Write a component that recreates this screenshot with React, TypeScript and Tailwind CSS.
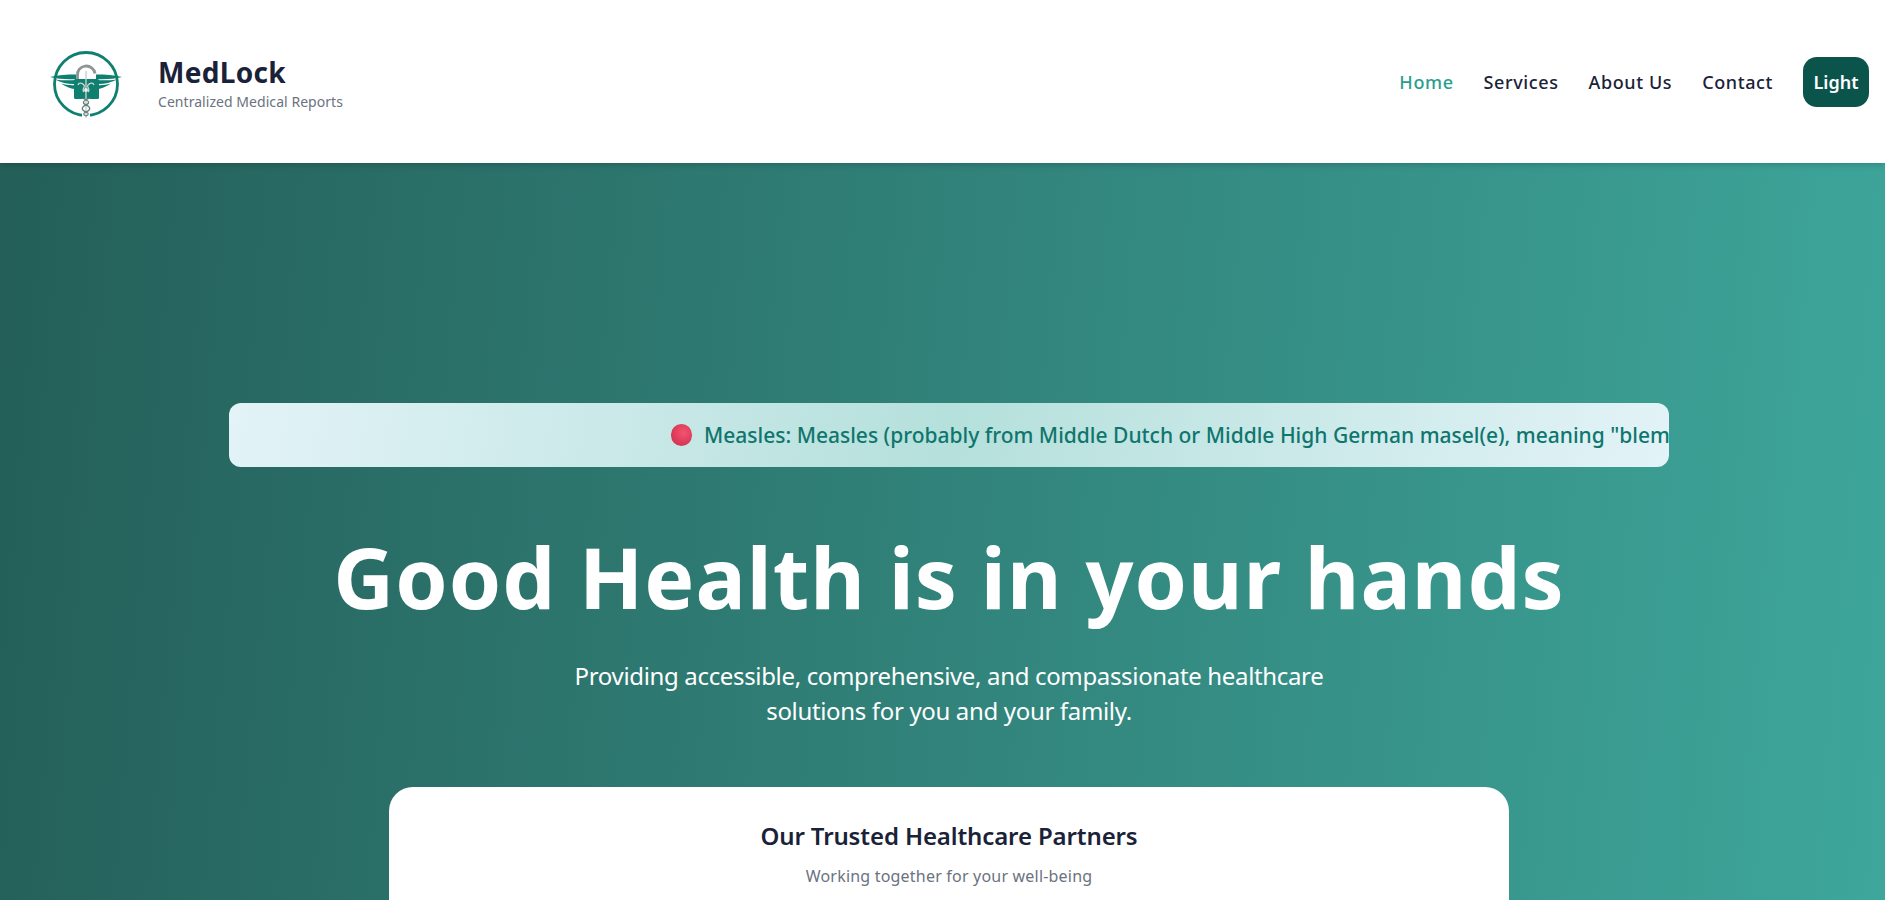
import React from "react";

// coordinates in the viewBox are page pixels, it was easier to read them off that way
const Logo = () => (
  <svg viewBox="50 47 72 72" className="w-[72px] h-[72px] mt-[3px]" fill="none">
    <circle cx="86" cy="84" r="31.5" stroke="#0f7f6f" strokeWidth="2.8" />
    {/* white gap behind the staff at the bottom of the ring */}
    <rect x="82" y="112" width="8" height="6" fill="#fff" />
    {/* wings, three feathers each */}
    <path d="M50 77 C58 75 67 74.5 76 74.5 L76 79 C67 79.5 58 79 50 77 Z" fill="#0f7f6f" />
    <path d="M55 79.5 C62 80.5 69 80.5 76 80 L76 84 C69 84.5 62 83 55 79.5 Z" fill="#0f7f6f" />
    <path d="M61 83.5 C66 85 71 85.5 76 85 L76 89 C71 89 66 87 61 83.5 Z" fill="#0f7f6f" />
    <path d="M122 77 C114 75 105 74.5 96 74.5 L96 79 C105 79.5 114 79 122 77 Z" fill="#0f7f6f" />
    <path d="M117 79.5 C110 80.5 103 80.5 96 80 L96 84 C103 84.5 110 83 117 79.5 Z" fill="#0f7f6f" />
    <path d="M111 83.5 C106 85 101 85.5 96 85 L96 89 C101 89 106 87 111 83.5 Z" fill="#0f7f6f" />
    {/* open shackle */}
    <path d="M77.5 80 V75.5 A8.8 8.5 0 0 1 95 73.5" stroke="#8f9494" strokeWidth="2.8" />
    {/* lock body */}
    <rect x="74" y="79" width="25" height="20" rx="1.5" fill="#0f7f6f" />
    {/* caduceus */}
    <path d="M86 71 V118" stroke="#c9cfce" strokeWidth="1.4" />
    <path d="M78 85 C79 82 82 83 84 85 C86 87 81 89 84 92 M94 85 C93 82 90 83 88 85 C86 87 91 89 88 92" stroke="#d0d6d5" strokeWidth="1.3" />
    <path d="M82 98 C90 101 90 103 86 105 C81 107 81 110 86 112 C89 113 89 115 86 116" stroke="#5f7f7a" strokeWidth="1.2" />
    <path d="M90 98 C82 101 82 103 86 105 C91 107 91 110 86 112 C83 113 83 115 86 116" stroke="#5f7f7a" strokeWidth="1.2" />
    <circle cx="86" cy="90" r="2" fill="#e8ecea" />
  </svg>
);

const navItems = ["Home", "Services", "About Us", "Contact"];

export default function App() {
  return (
    <div className="h-[900px] overflow-hidden bg-white font-['Noto_Sans',sans-serif]">
      {/* Header */}
      <header className="relative z-10 h-[163px] flex items-center justify-between pl-[50px] pr-4 bg-white shadow-md">
        <div className="flex items-center gap-[36px]">
          <Logo />
          <div className="flex flex-col pt-[3px]">
            <span className="text-[28px] leading-[34px] font-bold tracking-[0.3px] text-[#1a2238]">MedLock</span>
            <span className="mt-[3px] text-sm leading-[20px] tracking-[0.05px] text-[#6b7280]">Centralized Medical Reports</span>
          </div>
        </div>
        <nav className="flex items-center gap-[30px] text-lg font-medium tracking-[0.6px] text-[#1a2238]">
          {navItems.map((item, idx) => (
            <a key={item} className={idx === 0 ? "text-[#2a9d8f]" : ""}>
              {item}
            </a>
          ))}
          <button className="w-[66px] h-[50px] rounded-[14px] bg-[#0b544c] text-white text-lg font-semibold tracking-normal">Light</button>
        </nav>
      </header>

      {/* Hero */}
      <section className="h-[737px] overflow-hidden pl-[13px] pt-[240px] flex flex-col items-center bg-[linear-gradient(95deg,#245f59,#3ea69b)]">
        <div className="w-[1440px] h-[64px] shrink-0 rounded-xl overflow-hidden flex items-center pl-[442px] whitespace-nowrap bg-[linear-gradient(100deg,#e3f3f8,#b5e0db_50%,#e3f3f8)]">
          <span className="w-[21px] h-[22px] shrink-0 rounded-full bg-[radial-gradient(circle_at_60%_40%,#f4536f,#c92a4a)]" />
          <span className="ml-[12px] text-[21px] leading-[28px] font-medium text-[#0f766e]">
            Measles: Measles (probably from Middle Dutch or Middle High German masel(e), meaning "blemish, blood blister")
          </span>
        </div>

        <h1 className="mt-[54px] shrink-0 text-[84px] leading-[112px] font-bold tracking-[1px] text-white">Good Health is in your hands</h1>

        <p className="mt-[25px] shrink-0 w-[800px] text-center text-2xl leading-[35px] tracking-[-0.34px] text-white">
          Providing accessible, comprehensive, and compassionate healthcare solutions for you and your family.
        </p>

        <div className="mt-[59px] w-[1120px] h-[200px] shrink-0 rounded-3xl bg-white pt-[33px] text-center">
          <h2 className="text-2xl leading-[32px] font-semibold tracking-[-0.12px] text-[#1a2238]">Our Trusted Healthcare Partners</h2>
          <p className="mt-[12px] text-base leading-[24px] tracking-[0.2px] text-[#6b7280]">Working together for your well-being</p>
        </div>
      </section>
    </div>
  );
}
